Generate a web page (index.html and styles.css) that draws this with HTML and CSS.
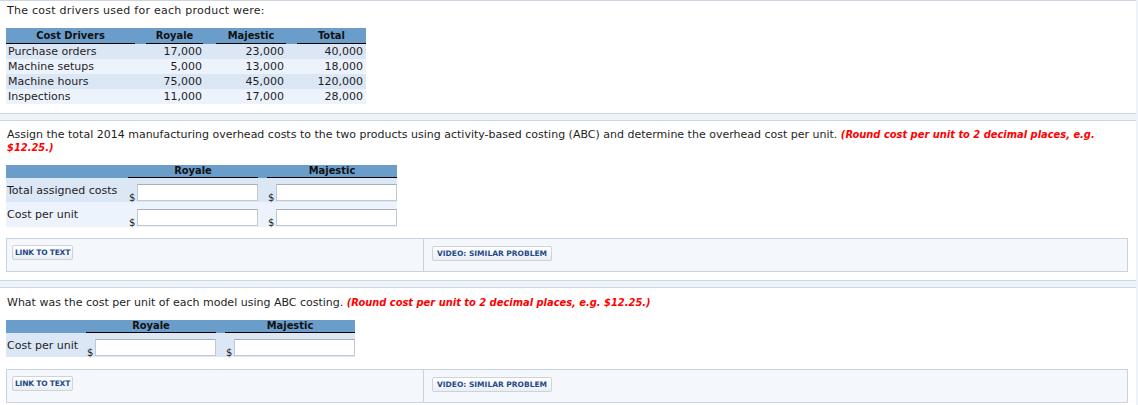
FILE: index.html
```html
<!DOCTYPE html>
<html>
<head>
<meta charset="utf-8">
<link rel="stylesheet" href="styles.css">
</head>
<body>
<div class="page">
  <section class="sec sec1">
    <p class="intro">The cost drivers used for each product were:</p>
    <div class="dtable">
      <div class="drow dhead">
        <div class="c c1"><span>Cost Drivers</span></div>
        <div class="c c2"><span>Royale</span></div>
        <div class="c c3"><span>Majestic</span></div>
        <div class="c c4"><span>Total</span></div>
      </div>
      <div class="drow dark">
        <div class="c c1"><span>Purchase orders</span></div>
        <div class="c c2 num"><span>17,000</span></div>
        <div class="c c3 num"><span>23,000</span></div>
        <div class="c c4 num"><span>40,000</span></div>
      </div>
      <div class="drow light">
        <div class="c c1"><span>Machine setups</span></div>
        <div class="c c2 num"><span>5,000</span></div>
        <div class="c c3 num"><span>13,000</span></div>
        <div class="c c4 num"><span>18,000</span></div>
      </div>
      <div class="drow dark">
        <div class="c c1"><span>Machine hours</span></div>
        <div class="c c2 num"><span>75,000</span></div>
        <div class="c c3 num"><span>45,000</span></div>
        <div class="c c4 num"><span>120,000</span></div>
      </div>
      <div class="drow light">
        <div class="c c1"><span>Inspections</span></div>
        <div class="c c2 num"><span>11,000</span></div>
        <div class="c c3 num"><span>17,000</span></div>
        <div class="c c4 num"><span>28,000</span></div>
      </div>
    </div>
  </section>

  <section class="sec sec2">
    <p class="q">Assign the total 2014 manufacturing overhead costs to the two products using activity-based costing (ABC) and determine the overhead cost per unit. <em class="hint">(Round cost per unit to 2 decimal places, e.g.<br>$12.25.)</em></p>
    <div class="atable wide">
      <div class="arow ahead">
        <div class="lab"></div>
        <div class="val"><span>Royale</span></div>
        <div class="val"><span>Majestic</span></div>
      </div>
      <div class="arow dark">
        <div class="lab">Total assigned costs</div>
        <div class="val"><i class="cur">$</i><input type="text"></div>
        <div class="val"><i class="cur">$</i><input type="text"></div>
      </div>
      <div class="arow light">
        <div class="lab">Cost per unit</div>
        <div class="val"><i class="cur">$</i><input type="text"></div>
        <div class="val"><i class="cur">$</i><input type="text"></div>
      </div>
    </div>
    <div class="links">
      <div class="lcell"><span class="btn btn-link">LINK TO TEXT</span></div>
      <div class="rcell"><span class="btn">VIDEO: SIMILAR PROBLEM</span></div>
    </div>
  </section>

  <section class="sec sec3">
    <p class="q">What was the cost per unit of each model using ABC costing. <em class="hint">(Round cost per unit to 2 decimal places, e.g. $12.25.)</em></p>
    <div class="atable narrow">
      <div class="arow ahead">
        <div class="lab"></div>
        <div class="val"><span>Royale</span></div>
        <div class="val"><span>Majestic</span></div>
      </div>
      <div class="arow dark">
        <div class="lab">Cost per unit</div>
        <div class="val"><i class="cur">$</i><input type="text"></div>
        <div class="val"><i class="cur">$</i><input type="text"></div>
      </div>
    </div>
    <div class="links">
      <div class="lcell"><span class="btn btn-link">LINK TO TEXT</span></div>
      <div class="rcell"><span class="btn">VIDEO: SIMILAR PROBLEM</span></div>
    </div>
  </section>
</div>
</body>
</html>
```

FILE: styles.css
```css
html, body {
  margin: 0;
  padding: 0;
}
body {
  background: #eef3fa;
  font-family: "DejaVu Sans", Verdana, sans-serif;
  font-size: 11px;
  color: #1e1e1e;
}
.page {
  width: 1136px;
}
.sec {
  background: #fff;
  border-top: 1px solid #cdd5e1;
  border-bottom: 1px solid #cdd5e1;
  margin-bottom: 6px;
  padding-left: 6px;
  padding-right: 8px;
}
p {
  margin: 0;
}

/* section 1 */
.sec1 {
  padding-top: 3px;
  padding-bottom: 9px;
}
.intro {
  line-height: 14px;
  padding-left: 1px;
  letter-spacing: 0.25px;
}
.dtable {
  margin-top: 10px;
  width: 360px;
}
.drow {
  display: flex;
  height: 15px;
  line-height: 15px;
}
.drow.dhead {
  height: 16px;
  background: #6b9dcb;
  font-weight: bold;
  font-stretch: condensed;
  color: #111;
}
.dark { background: #dce7f6; }
.light { background: #edf3fd; }
.c { box-sizing: border-box; }
.c span { display: block; }
.c1 { width: 129px; }
.c2 { width: 68px; padding-left: 11px; }
.c3 { width: 83px; padding-left: 13px; }
.c4 { width: 80px; padding-left: 11px; }
.dhead .c span {
  text-align: center;
  border-bottom: 1px solid #000;
  line-height: 15px;
}
.drow .c1 span { padding-left: 2px; }
.dhead .c1 span { padding-left: 0; }
.num span { text-align: right; }
.c2.num span { padding-right: 1px; }
.c3.num span { padding-right: 2px; }
.c4.num span { padding-right: 3px; }

/* answer sections */
.q {
  line-height: 13px;
  padding-left: 1px;
}
.hint {
  color: #ff0000;
  font-weight: bold;
  font-style: italic;
  font-stretch: condensed;
}
.sec2 { padding-top: 7px; padding-bottom: 8px; }
.sec3 { padding-top: 8px; padding-bottom: 40px; }

.atable {
  margin-top: 11px;
  display: inline-block;
}
.arow {
  display: flex;
  align-items: center;
}
.arow.ahead {
  background: #6b9dcb;
  font-weight: bold;
  font-stretch: condensed;
  color: #111;
  height: 13px;
  align-items: stretch;
}
.arow.dark { height: 24px; }
.arow.light { height: 25px; }
.wide .lab { width: 122px; }
.narrow .lab { width: 80px; }
.lab {
  box-sizing: border-box;
  padding-left: 1px;
  white-space: nowrap;
}
.val {
  width: 130px;
  display: flex;
  align-items: flex-end;
  align-self: stretch;
}
.val + .val { margin-left: 9px; }
.ahead .val span {
  display: block;
  width: 100%;
  text-align: center;
  line-height: 12px;
  border-bottom: 1px solid #000;
}
.cur {
  font-style: normal;
  font-size: 10px;
  line-height: 10px;
  width: 9px;
  padding-left: 1px;
  box-sizing: border-box;
  margin-bottom: -1px;
}
.val input {
  box-sizing: border-box;
  width: 121px;
  height: 17px;
  margin: 0 0 1px 0;
  padding: 0 2px;
  border: 1px solid #c3c8cf;
  border-top-color: #a8aeb6;
  background: #fff;
  font: inherit;
}

.links {
  margin-top: 11px;
  display: flex;
  width: 1122px;
  box-sizing: border-box;
  border: 1px solid #c9d3e0;
  background: #f4f7fb;
  height: 34px;
}
.sec3 .links { margin-top: 12px; }
.lcell {
  width: 417px;
  padding: 6px 0 0 5px;
  box-sizing: border-box;
  border-right: 1px solid #c9d3e0;
}
.rcell {
  flex: 1;
  padding: 7px 0 0 8px;
}
.btn {
  display: inline-block;
  box-sizing: border-box;
  height: 15px;
  line-height: 13px;
  padding: 0 4px;
  border: 1px solid #ccd3dc;
  border-radius: 2px;
  background: linear-gradient(#ffffff, #eaeef3);
  color: #1f4a8a;
  font-weight: bold;
  font-size: 7.5px;
}
.btn-link {
  padding: 0 2px;
  letter-spacing: -0.2px;
}
```
